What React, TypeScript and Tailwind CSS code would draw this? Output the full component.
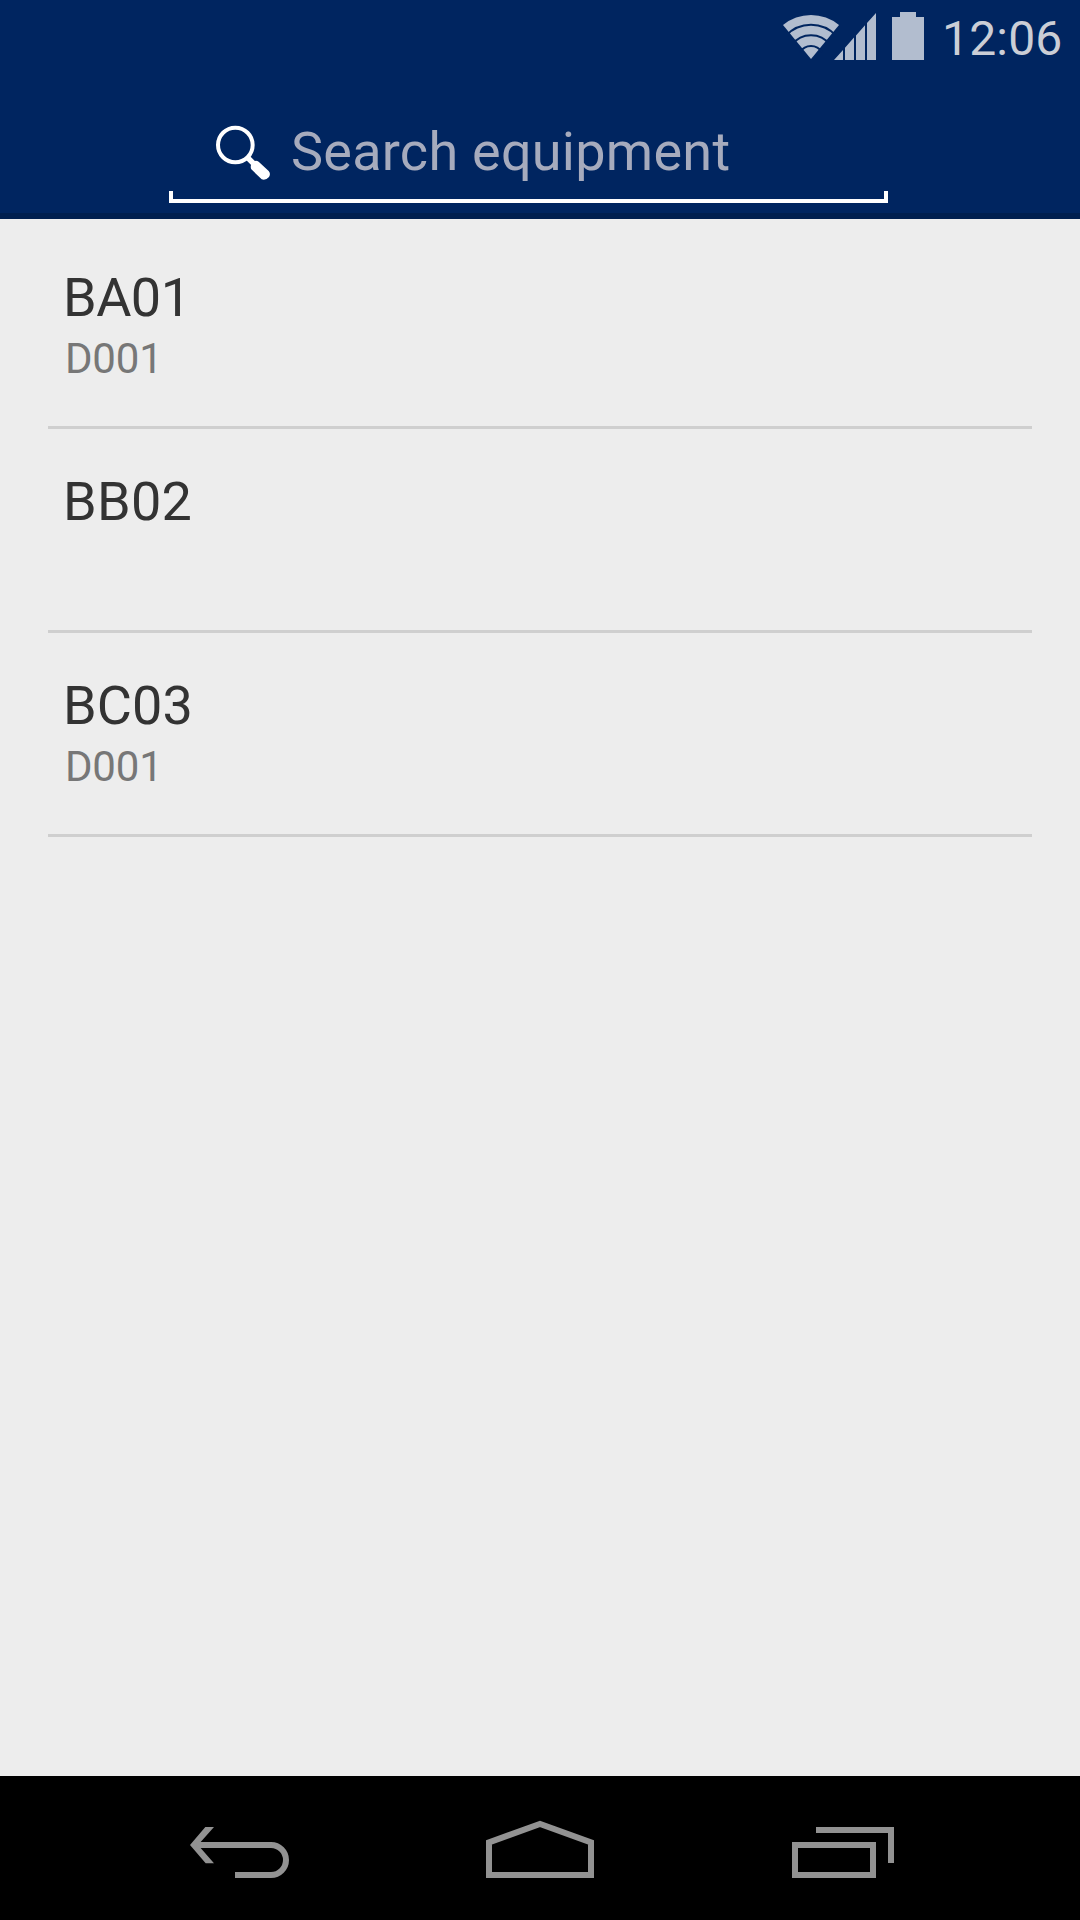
const rows = [
  { name: "BA01", detail: "D001", tracking: "tracking-[-0.5px]" },
  { name: "BB02", detail: "", tracking: "tracking-[0.3px]" },
  { name: "BC03", detail: "D001", tracking: "tracking-[0.1px]" },
];

function StatusIcons() {
  return (
    <svg className="h-[75px] w-[172px] shrink-0" viewBox="0 0 172 75" fill="#b2bdcf">
      <path d="M13 25A44 44 0 0 1 69 25L41 59Z" />
      <g fill="none" stroke="#002560" strokeWidth="2">
        <path d="M16 35.7A34.2 34.2 0 0 1 66 35.7" />
        <path d="M22 44.7A23.8 23.8 0 0 1 60 44.7" />
        <path d="M30 52.1A13 13 0 0 1 52 52.1" />
      </g>
      <path d="M64 60L73 50V60ZM75 60V47.7L84 37.6V60ZM86 60V35.4L95 25.3V60ZM97 60V23.1L106 13V60Z" />
      <path d="M122 17H130V12H146V17H154V60H122Z" />
    </svg>
  );
}

function SearchIcon() {
  return (
    <svg className="mt-[48px] ml-[44px] size-[60px] shrink-0" viewBox="159 39 180 180">
      <circle cx="226" cy="105" r="52" fill="none" stroke="#fff" strokeWidth="12" />
      <path d="M264 144L282 162" stroke="#fff" strokeWidth="16" />
      <path d="M273 165Q274 158 280 155Q288 150 296 155L326 183Q333 191 327 201Q316 213 305 208L274 178Q271 173 273 165Z" fill="#fff" />
    </svg>
  );
}

export default function App() {
  return (
    <div className="flex h-[1920px] w-[1080px] flex-col bg-[#ededed] font-['Roboto',sans-serif] leading-none">
      <header className="flex h-[219px] shrink-0 flex-col border-b-6 border-[#001f4f] bg-[#002560]">
        <div className="flex h-[75px] shrink-0 pl-[770px]">
          <StatusIcons />
          <span className="mt-[15px] text-[48px] tracking-[0.2px] text-[#cbced6]">12:06</span>
        </div>
        <div className="ml-[169px] w-[719px]">
          <div className="flex h-[116px] items-start">
            <SearchIcon />
            <span className="mt-[50px] ml-[18px] text-[54px] tracking-[0.25px] whitespace-nowrap text-[#a6abbd]">Search equipment</span>
          </div>
          <div className="h-3 border-x-4 border-b-4 border-white" />
        </div>
      </header>
      <main className="flex-1 px-12 pt-1.5">
        {rows.map((row) => (
          <div key={row.name} className="h-[204px] border-b-[3px] border-[#cfcfcf] pt-[46px] pl-[15px]">
            <div className={`text-[54px] text-[#333] ${row.tracking}`}>{row.name}</div>
            <div className="mt-[13px] ml-0.5 text-[42px] tracking-[-0.2px] text-[#777]">{row.detail}</div>
          </div>
        ))}
      </main>
      <footer className="flex h-[144px] shrink-0 bg-black pl-[170px]">
        <svg className="h-[144px] w-[140px]" viewBox="0 33 420 432">
          <path d="M60 240L106 186H132L84 240L132 295H107Z" fill="#929292" />
          <path d="M80 240H303A45 45 0 0 1 303 330H195" fill="none" stroke="#929292" strokeWidth="18" />
        </svg>
        <svg className="ml-[160px] h-[144px] w-[140px]" viewBox="0 33 420 432" fill="none" stroke="#929292" strokeWidth="18">
          <path d="M57 330V232L210 177L363 232V330Z" />
        </svg>
        <svg className="ml-[165px] h-[144px] w-[140px]" viewBox="0 33 420 432" fill="none" stroke="#929292" strokeWidth="18">
          <path d="M60 240H294V330H60ZM123 195H348V294" />
        </svg>
      </footer>
    </div>
  );
}
